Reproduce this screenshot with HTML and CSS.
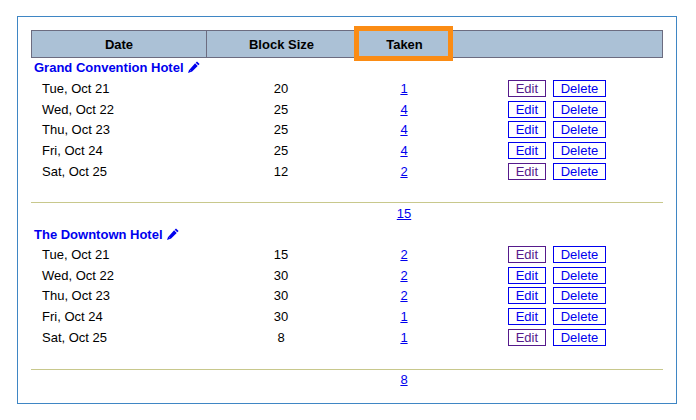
FILE: index.html
```html
<!DOCTYPE html>
<html lang="en">
<head>
<meta charset="utf-8">
<title>Hotel Blocks</title>
<link rel="stylesheet" href="styles.css">
</head>
<body>
<main class="panel">
  <div class="grid head">
    <div class="th th-date">Date</div>
    <div class="th">Block Size</div>
    <div class="th th-taken">Taken<span class="callout"></span></div>
    <div class="th"></div>
  </div>

  <section class="hotel">
    <h2 class="hotel-name"><a href="#h1">Grand Convention Hotel</a>
      <svg class="pencil" viewBox="0 0 12 12"><path d="M9 .4 11.6 3l-1.3 1.3-2.6-2.6zM7.1 2.3l2.6 2.6-5.8 5.8-.9-.2-.1-1.1-1.1-.1-.2-.9zM1.2 8.6 3.4 10.8 0 12z"/></svg>
    </h2>
    <div class="grid row"><div class="date">Tue, Oct 21</div><div class="num">20</div><div class="num"><a href="#t">1</a></div><div class="actions"><a class="btn seen" href="#e">Edit</a><a class="btn" href="#d">Delete</a></div></div>
    <div class="grid row"><div class="date">Wed, Oct 22</div><div class="num">25</div><div class="num"><a href="#t">4</a></div><div class="actions"><a class="btn" href="#e">Edit</a><a class="btn" href="#d">Delete</a></div></div>
    <div class="grid row"><div class="date">Thu, Oct 23</div><div class="num">25</div><div class="num"><a href="#t">4</a></div><div class="actions"><a class="btn" href="#e">Edit</a><a class="btn" href="#d">Delete</a></div></div>
    <div class="grid row"><div class="date">Fri, Oct 24</div><div class="num">25</div><div class="num"><a href="#t">4</a></div><div class="actions"><a class="btn" href="#e">Edit</a><a class="btn" href="#d">Delete</a></div></div>
    <div class="grid row"><div class="date">Sat, Oct 25</div><div class="num">12</div><div class="num"><a href="#t">2</a></div><div class="actions"><a class="btn seen" href="#e">Edit</a><a class="btn" href="#d">Delete</a></div></div>
    <div class="grid total"><div></div><div></div><div class="num"><a href="#t">15</a></div><div></div></div>
  </section>

  <section class="hotel">
    <h2 class="hotel-name"><a href="#h2">The Downtown Hotel</a>
      <svg class="pencil" viewBox="0 0 12 12"><path d="M9 .4 11.6 3l-1.3 1.3-2.6-2.6zM7.1 2.3l2.6 2.6-5.8 5.8-.9-.2-.1-1.1-1.1-.1-.2-.9zM1.2 8.6 3.4 10.8 0 12z"/></svg>
    </h2>
    <div class="grid row"><div class="date">Tue, Oct 21</div><div class="num">15</div><div class="num"><a href="#t">2</a></div><div class="actions"><a class="btn seen" href="#e">Edit</a><a class="btn" href="#d">Delete</a></div></div>
    <div class="grid row"><div class="date">Wed, Oct 22</div><div class="num">30</div><div class="num"><a href="#t">2</a></div><div class="actions"><a class="btn" href="#e">Edit</a><a class="btn" href="#d">Delete</a></div></div>
    <div class="grid row"><div class="date">Thu, Oct 23</div><div class="num">30</div><div class="num"><a href="#t">2</a></div><div class="actions"><a class="btn" href="#e">Edit</a><a class="btn" href="#d">Delete</a></div></div>
    <div class="grid row"><div class="date">Fri, Oct 24</div><div class="num">30</div><div class="num"><a href="#t">1</a></div><div class="actions"><a class="btn" href="#e">Edit</a><a class="btn" href="#d">Delete</a></div></div>
    <div class="grid row"><div class="date">Sat, Oct 25</div><div class="num">8</div><div class="num"><a href="#t">1</a></div><div class="actions"><a class="btn seen" href="#e">Edit</a><a class="btn" href="#d">Delete</a></div></div>
    <div class="grid total"><div></div><div></div><div class="num"><a href="#t">8</a></div><div></div></div>
  </section>
</main>
</body>
</html>
```

FILE: styles.css
```css
html, body {
  margin: 0;
  padding: 0;
  background: #fff;
}
body {
  padding: 16px 0 0 17px;
  font: 13px/15px "Liberation Sans", Arial, sans-serif;
  color: #000;
}
a {
  color: #0000ee;
}
.panel {
  box-sizing: border-box;
  width: 660px;
  height: 388px;
  padding: 13px;
  border: 1px solid #3f86c4;
}
.grid {
  display: grid;
  grid-template-columns: 175px 150px 96px 211px;
}
.head {
  box-sizing: border-box;
  height: 28px;
  width: 632px;
  background: #abc1d6;
  border: 1px solid #6c6c80;
}
.th {
  display: flex;
  align-items: center;
  justify-content: center;
  font-weight: 700;
  margin-left: -1px;
}
.th-date {
  margin-left: 0;
  border-right: 1px solid #6c6c80;
}
.th-taken {
  position: relative;
}
.callout {
  position: absolute;
  left: -2px;
  top: -5px;
  box-sizing: border-box;
  width: 99px;
  height: 35px;
  border: 5px solid #fb8c14;
}
.hotel-name {
  box-sizing: border-box;
  height: 20.2px;
  margin: 0;
  padding: 2px 0 0 3px;
  font-size: 13px;
  line-height: 15px;
  font-weight: 700;
  display: flex;
  gap: 4px;
}
.hotel + .hotel .hotel-name {
  height: 20.3px;
  padding-top: 3px;
}
.hotel-name a {
  color: #0000ee;
  text-decoration: none;
}
.pencil {
  width: 12px;
  height: 12px;
  margin-top: 1px;
  fill: #0000ee;
}
.row {
  height: 20.7px;
  align-items: center;
}
.date {
  padding-left: 11px;
}
.num {
  text-align: center;
}
.actions {
  display: flex;
  justify-content: center;
  gap: 7.6px;
  padding-right: 1px;
}
.btn {
  box-sizing: border-box;
  height: 17px;
  padding: 0 6.5px;
  border: 1px solid #0000ee;
  line-height: 15px;
  text-decoration: none;
}
.btn.seen {
  color: #551a8b;
  border-color: #551a8b;
}
.total {
  box-sizing: border-box;
  height: 21.9px;
  margin-top: 20.4px;
  border-top: 1px solid #c8c88c;
  align-items: center;
}
.hotel + .hotel .total {
  margin-top: 21px;
  padding-bottom: 1px;
}
```
